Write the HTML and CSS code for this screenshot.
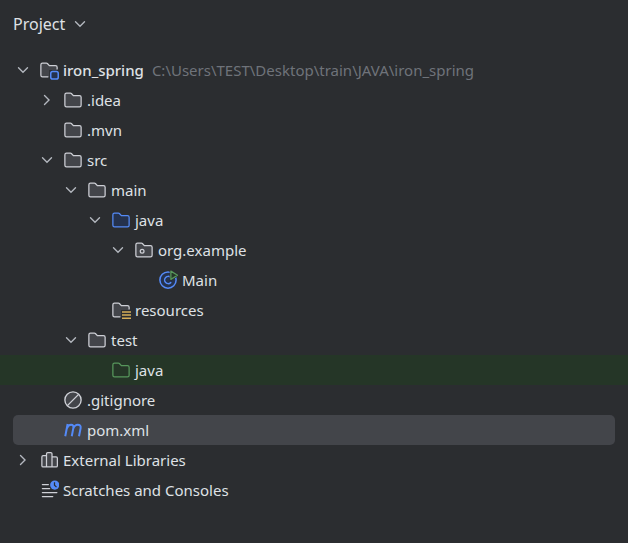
FILE: index.html
```html
<!DOCTYPE html>
<html lang="en">
<head>
    <meta charset="UTF-8">
    <meta name="viewport" content="width=device-width, initial-scale=1.0">
    <title>Project</title>
    <link rel="stylesheet" href="styles.css">
</head>
<body>

    <!-- Shared icon shapes -->
    <svg class="sprite" aria-hidden="true">
        <symbol id="chevron-down" viewBox="0 0 16 16">
            <path d="M4.4 6.2L8 9.8L11.6 6.2" fill="none" stroke="#b4b8bf" stroke-width="1.1" stroke-linecap="round"/>
        </symbol>
        <symbol id="chevron-right" viewBox="0 0 16 16">
            <path d="M6 4.4L9.6 8L6 11.6" fill="none" stroke="#b4b8bf" stroke-width="1.1" stroke-linecap="round"/>
        </symbol>
        <symbol id="folder" viewBox="0 0 16 16">
            <path d="M1.5 3.8C1.5 3 2.1 2.5 2.8 2.5H5.9C6.2 2.5 6.5 2.6 6.7 2.8L8.3 4.5H13.2C13.9 4.5 14.5 5.1 14.5 5.8V12.2C14.5 12.9 13.9 13.5 13.2 13.5H2.8C2.1 13.5 1.5 12.9 1.5 12.2Z"/>
        </symbol>
        <symbol id="folder-cut" viewBox="0 0 16 16">
            <path d="M7.5 13.5H2.8C2.1 13.5 1.5 12.9 1.5 12.2V3.8C1.5 3 2.1 2.5 2.8 2.5H5.9C6.2 2.5 6.5 2.6 6.7 2.8L8.3 4.5H13.2C13.9 4.5 14.5 5.1 14.5 5.8V7.5"/>
        </symbol>
    </svg>

    <main class="panel">
        <header class="panel-header">
            <button class="title" type="button">Project
                <svg class="icon"><use href="#chevron-down"/></svg>
            </button>
        </header>

        <ul class="tree">
            <li class="row level-0">
                <button class="toggle" type="button" aria-label="Collapse iron_spring"><svg class="icon"><use href="#chevron-down"/></svg></button>
                <svg class="icon folder" viewBox="0 0 16 16">
                    <path d="M8.3 13.5H2.8C2.1 13.5 1.5 12.9 1.5 12.2V3.8C1.5 3 2.1 2.5 2.8 2.5H5.9C6.2 2.5 6.5 2.6 6.7 2.8L8.3 4.5H13.2C13.9 4.5 14.5 5.1 14.5 5.8V8H8.3Z" stroke="none"/>
                    <use href="#folder-cut" fill="none"/>
                    <rect x="8.5" y="8" width="7.5" height="8" fill="#2b2d30" stroke="none"/>
                    <rect x="9.4" y="9.2" width="6" height="6" rx="1.5" fill="#25324d" stroke="#548af7" stroke-width="1.2"/>
                </svg>
                <span class="name root">iron_spring</span>
                <span class="path">C:\Users\TEST\Desktop\train\JAVA\iron_spring</span>
            </li>
            <li class="row level-1">
                <button class="toggle" type="button" aria-label="Expand .idea"><svg class="icon"><use href="#chevron-right"/></svg></button>
                <svg class="icon folder"><use href="#folder"/></svg>
                <span class="name">.idea</span>
            </li>
            <li class="row level-1">
                <span class="toggle"></span>
                <svg class="icon folder"><use href="#folder"/></svg>
                <span class="name">.mvn</span>
            </li>
            <li class="row level-1">
                <button class="toggle" type="button" aria-label="Collapse src"><svg class="icon"><use href="#chevron-down"/></svg></button>
                <svg class="icon folder"><use href="#folder"/></svg>
                <span class="name">src</span>
            </li>
            <li class="row level-2">
                <button class="toggle" type="button" aria-label="Collapse main"><svg class="icon"><use href="#chevron-down"/></svg></button>
                <svg class="icon folder"><use href="#folder"/></svg>
                <span class="name">main</span>
            </li>
            <li class="row level-3">
                <button class="toggle" type="button" aria-label="Collapse java"><svg class="icon"><use href="#chevron-down"/></svg></button>
                <svg class="icon folder source"><use href="#folder"/></svg>
                <span class="name">java</span>
            </li>
            <li class="row level-4">
                <button class="toggle" type="button" aria-label="Collapse org.example"><svg class="icon"><use href="#chevron-down"/></svg></button>
                <svg class="icon folder" viewBox="0 0 16 16">
                    <use href="#folder"/>
                    <circle cx="6.5" cy="9" r="1.5" fill="none"/>
                </svg>
                <span class="name">org.example</span>
            </li>
            <li class="row level-5">
                <span class="toggle"></span>
                <svg class="icon" viewBox="0 0 16 16">
                    <circle cx="8" cy="8" r="6.5" fill="#25324d" stroke="#548af7" stroke-width="1.2"/>
                    <path d="M10.2 10.1A2.9 2.9 0 1 1 10.2 5.9" fill="none" stroke="#548af7" stroke-width="1.2" stroke-linecap="round"/>
                    <path d="M9.3 0H12L16 3.3V5L10.5 8.6H9.3Z" fill="#2b2d30"/>
                    <path d="M10.3 .9V7.5L15.6 4.2Z" fill="#253627" stroke="#57965c" stroke-linejoin="round"/>
                </svg>
                <span class="name">Main</span>
            </li>
            <li class="row level-3">
                <span class="toggle"></span>
                <svg class="icon folder" viewBox="0 0 16 16">
                    <path d="M8 13.5H2.8C2.1 13.5 1.5 12.9 1.5 12.2V3.8C1.5 3 2.1 2.5 2.8 2.5H5.9C6.2 2.5 6.5 2.6 6.7 2.8L8.3 4.5H13.2C13.9 4.5 14.5 5.1 14.5 5.8V8H8Z" stroke="none"/>
                    <use href="#folder-cut" fill="none"/>
                    <rect x="8" y="8" width="8" height="8" fill="#2b2d30" stroke="none"/>
                    <path d="M8.8 9.5H16M8.8 12H16M8.8 14.5H16" stroke="#d6ae58" stroke-width="1.2"/>
                </svg>
                <span class="name">resources</span>
            </li>
            <li class="row level-2">
                <button class="toggle" type="button" aria-label="Collapse test"><svg class="icon"><use href="#chevron-down"/></svg></button>
                <svg class="icon folder"><use href="#folder"/></svg>
                <span class="name">test</span>
            </li>
            <li class="row level-3 test-root">
                <span class="toggle"></span>
                <svg class="icon folder tests"><use href="#folder"/></svg>
                <span class="name">java</span>
            </li>
            <li class="row level-1">
                <span class="toggle"></span>
                <svg class="icon" viewBox="0 0 16 16">
                    <circle cx="8" cy="8" r="6.5" fill="#43454a" stroke="#ced0d6" stroke-width="1.1"/>
                    <path d="M3.5 12.5L12.5 3.5" stroke="#ced0d6" stroke-width="1.1"/>
                </svg>
                <span class="name">.gitignore</span>
            </li>
            <li class="row level-1 selected">
                <span class="toggle"></span>
                <svg class="icon" viewBox="0 0 16 16">
                    <path d="M1.8 13L3.7 3.2M3 6.9C3.8 4.8 5 3.8 6.5 3.8C8 3.8 8.6 4.8 8.3 6.3L7 13M8.2 6.9C9 4.8 10.2 3.8 11.8 3.8C13.6 3.8 14.4 4.9 14.1 6.5L12.8 13" fill="none" stroke="#548af7" stroke-width="1.6"/>
                </svg>
                <span class="name">pom.xml</span>
            </li>
            <li class="row level-0">
                <button class="toggle" type="button" aria-label="Expand External Libraries"><svg class="icon"><use href="#chevron-right"/></svg></button>
                <svg class="icon folder" viewBox="0 0 16 16">
                    <path d="M6 4.5H3.3C2.7 4.5 2.3 4.9 2.3 5.5V12.5C2.3 13.1 2.7 13.5 3.3 13.5H6ZM6 13.5V3C6 2.4 6.4 2 7 2H9.4C10 2 10.4 2.4 10.4 3V13.5ZM10.4 5.5H13.7C14.3 5.5 14.7 5.9 14.7 6.5V12.5C14.7 13.1 14.3 13.5 13.7 13.5H10.4Z"/>
                </svg>
                <span class="name">External Libraries</span>
            </li>
            <li class="row level-0">
                <span class="toggle"></span>
                <svg class="icon" viewBox="0 0 16 16">
                    <path d="M2.7 3.6H7.5M2.7 6.8H8.5M2.7 10H14.3M2.7 13.2H11" stroke="#ced0d6" stroke-linecap="round"/>
                    <circle cx="12.6" cy="4" r="3.7" fill="#548af7"/>
                    <path d="M12.4 1.8V4.2L14 5.7" fill="none" stroke="#2b2d30"/>
                </svg>
                <span class="name">Scratches and Consoles</span>
            </li>
        </ul>
    </main>

</body>
</html>
```

FILE: styles.css
```css
/* Overall page styling */
body {
    font-family: "Segoe UI", "Noto Sans", sans-serif;
    font-size: 15px;
    margin: 0;
    background: #2b2d30;
    color: #dfe1e5;
}

button {
    font: inherit;
    color: inherit;
    background: none;
    border: none;
    padding: 0;
    cursor: pointer;
}

.sprite {
    display: none;
}

.icon {
    display: block;
    flex: none;
    width: 20px;
    height: 20px;
}

/* Header */
.panel-header {
    display: flex;
    align-items: center;
    height: 48px;
    padding: 0 13px;
}

.title {
    display: flex;
    align-items: center;
    gap: 5px;
    font-size: 16px;
}

/* Project tree */
.tree {
    list-style: none;
    margin: 0;
    padding: 7px 0;
}

.row {
    display: flex;
    align-items: center;
    height: 30px;
    padding-right: 13px;
    white-space: nowrap;
}

.level-0 { padding-left: 13px; }
.level-1 { padding-left: 37px; }
.level-2 { padding-left: 61px; }
.level-3 { padding-left: 85px; }
.level-4 { padding-left: 108px; }
.level-5 { padding-left: 132px; }

.toggle {
    flex: none;
    width: 20px;
    margin-right: 6px;
}

.name {
    margin-left: 4px;
}

.root {
    font-weight: 500;
}

.path {
    margin-left: 8px;
    color: #6f737a;
}

/* Row states */
.test-root {
    background: #253627;
}

.selected {
    margin: 0 13px;
    padding-left: 24px;
    background: #43454a;
    border-radius: 5px;
}

/* Folder colors */
.folder {
    fill: #43454a;
    stroke: #ced0d6;
}

.source {
    fill: #25324d;
    stroke: #548af7;
}

.tests {
    fill: #253627;
    stroke: #57965c;
}
```
